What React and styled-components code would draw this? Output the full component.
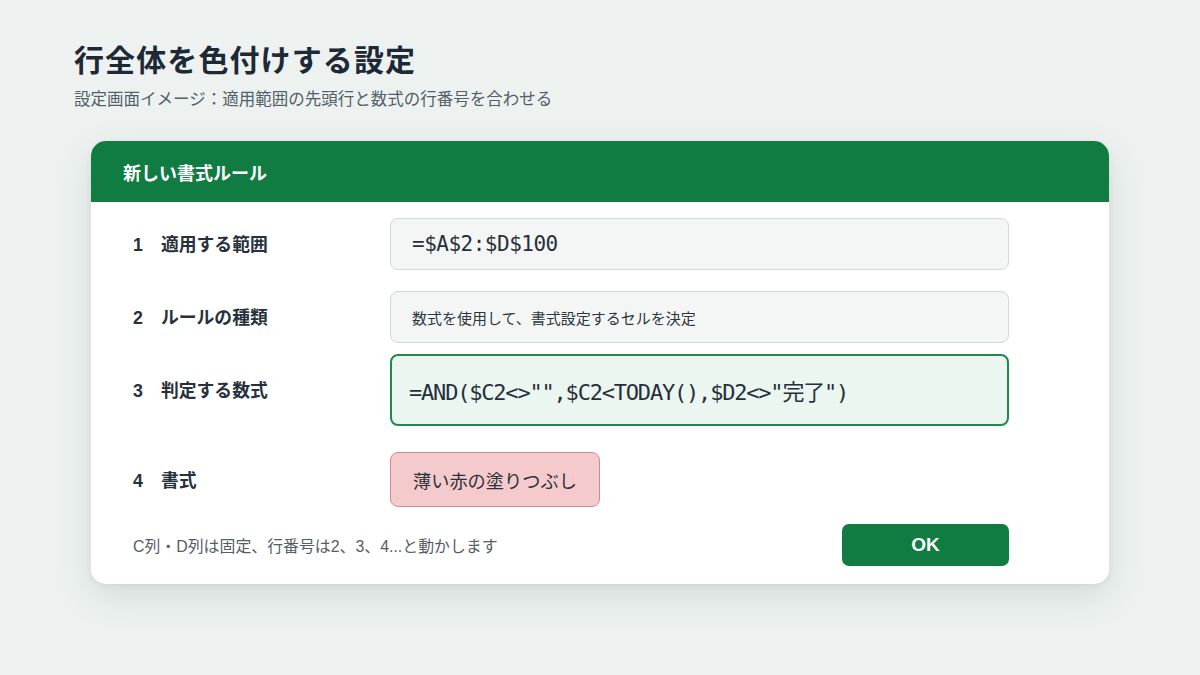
import React from "react";
import styled, { createGlobalStyle } from "styled-components";

const GlobalStyle = createGlobalStyle`
  html, body {
    margin: 0;
    padding: 0;
    background: #edf2f0;
  }
  body {
    font-family: "Liberation Sans", "Noto Sans CJK JP", sans-serif;
    color: #1f2a37;
  }
`;

const Page = styled.div`
  width: 1200px;
  height: 675px;
  box-sizing: border-box;
  padding: 41px 0 0 74px;
  background: #edf2f0;
  overflow: hidden;
`;

const Title = styled.h1`
  margin: 0;
  font-size: 30px;
  line-height: 40px;
  font-weight: 700;
  color: #1e2936;
  letter-spacing: 1.1px;
`;

const Subtitle = styled.p`
  margin: 8px 0 0;
  font-size: 16.5px;
  line-height: 20px;
  color: #545e68;
`;

const Card = styled.section`
  margin: 32px 0 0 17px;
  width: 1018px;
  background: #ffffff;
  border-radius: 15px;
  overflow: hidden;
  box-shadow: 0 12px 36px rgba(40, 70, 55, 0.13), 0 2px 6px rgba(40, 70, 55, 0.06);
`;

const CardHeader = styled.header`
  height: 61px;
  display: flex;
  align-items: center;
  padding: 0 32px;
  background: #107c41;
  color: #ffffff;
  font-size: 18px;
  font-weight: 700;
`;

const CardBody = styled.div`
  padding: 16px 100px 18px 42px;
  display: flex;
  flex-direction: column;
`;

const Row = styled.div`
  display: grid;
  grid-template-columns: 257px 619px;
  align-items: center;
  margin-top: ${(p) => p.$gap || 0}px;
`;

const Label = styled.div`
  display: flex;
  align-items: baseline;
  margin-top: -2px;
  font-size: 17.8px;
  font-weight: 700;
  color: #27313c;
`;

const Num = styled.span`
  width: 28px;
  flex: none;
`;

const Field = styled.div`
  box-sizing: border-box;
  height: ${(p) => p.$h}px;
  display: flex;
  align-items: center;
  padding-left: ${(p) => p.$pad || 21}px;
  border-radius: 8px;
  background: ${(p) => (p.$active ? "#ecf6f0" : "#f4f6f5")};
  border: ${(p) => (p.$active ? "2px solid #1f8a4c" : "1.5px solid #d3d7d5")};
  color: #27313c;
  white-space: nowrap;
  overflow: hidden;
`;

const Mono = styled.span`
  font-family: "DejaVu Sans Mono", "Noto Sans CJK JP", monospace;
  font-size: ${(p) => p.$size}px;
  letter-spacing: ${(p) => p.$track}px;
  color: #26303b;
`;

const PlainText = styled.span`
  font-size: 15px;
  color: #2d3640;
`;

const Swatch = styled.div`
  justify-self: start;
  box-sizing: border-box;
  height: 55px;
  display: flex;
  align-items: center;
  padding: 0 22px;
  border-radius: 8px;
  background: #f5cacc;
  border: 1.5px solid #cc8d92;
  font-size: 18.2px;
  color: #2a323b;
`;

const Footer = styled.div`
  margin-top: 17px;
  display: grid;
  grid-template-columns: 1fr 167px;
  align-items: center;
`;

const Note = styled.p`
  margin: 0;
  font-size: 15.9px;
  color: #555e66;
`;

const OkButton = styled.button`
  height: 42px;
  border: none;
  border-radius: 7px;
  background: #107c41;
  color: #ffffff;
  font-family: "Liberation Sans", sans-serif;
  font-size: 19px;
  font-weight: 700;
  cursor: pointer;
`;

export default function App() {
  return (
    <>
      <GlobalStyle />
      <Page>
        <Title>行全体を色付けする設定</Title>
        <Subtitle>設定画面イメージ：適用範囲の先頭行と数式の行番号を合わせる</Subtitle>
        <Card>
          <CardHeader>新しい書式ルール</CardHeader>
          <CardBody>
            <Row>
              <Label>
                <Num>1</Num>適用する範囲
              </Label>
              <Field $h={52}>
                <Mono $size={21} $track={-0.5}>=$A$2:$D$100</Mono>
              </Field>
            </Row>
            <Row $gap={21}>
              <Label>
                <Num>2</Num>ルールの種類
              </Label>
              <Field $h={52}>
                <PlainText>数式を使用して、書式設定するセルを決定</PlainText>
              </Field>
            </Row>
            <Row $gap={11}>
              <Label>
                <Num>3</Num>判定する数式
              </Label>
              <Field $h={72} $active $pad={17}>
                <Mono $size={22} $track={-1.2}>=AND($C2&lt;&gt;"",$C2&lt;TODAY(),$D2&lt;&gt;"完了")</Mono>
              </Field>
            </Row>
            <Row $gap={26}>
              <Label>
                <Num>4</Num>書式
              </Label>
              <Swatch>薄い赤の塗りつぶし</Swatch>
            </Row>
            <Footer>
              <Note>C列・D列は固定、行番号は2、3、4...と動かします</Note>
              <OkButton>OK</OkButton>
            </Footer>
          </CardBody>
        </Card>
      </Page>
    </>
  );
}
